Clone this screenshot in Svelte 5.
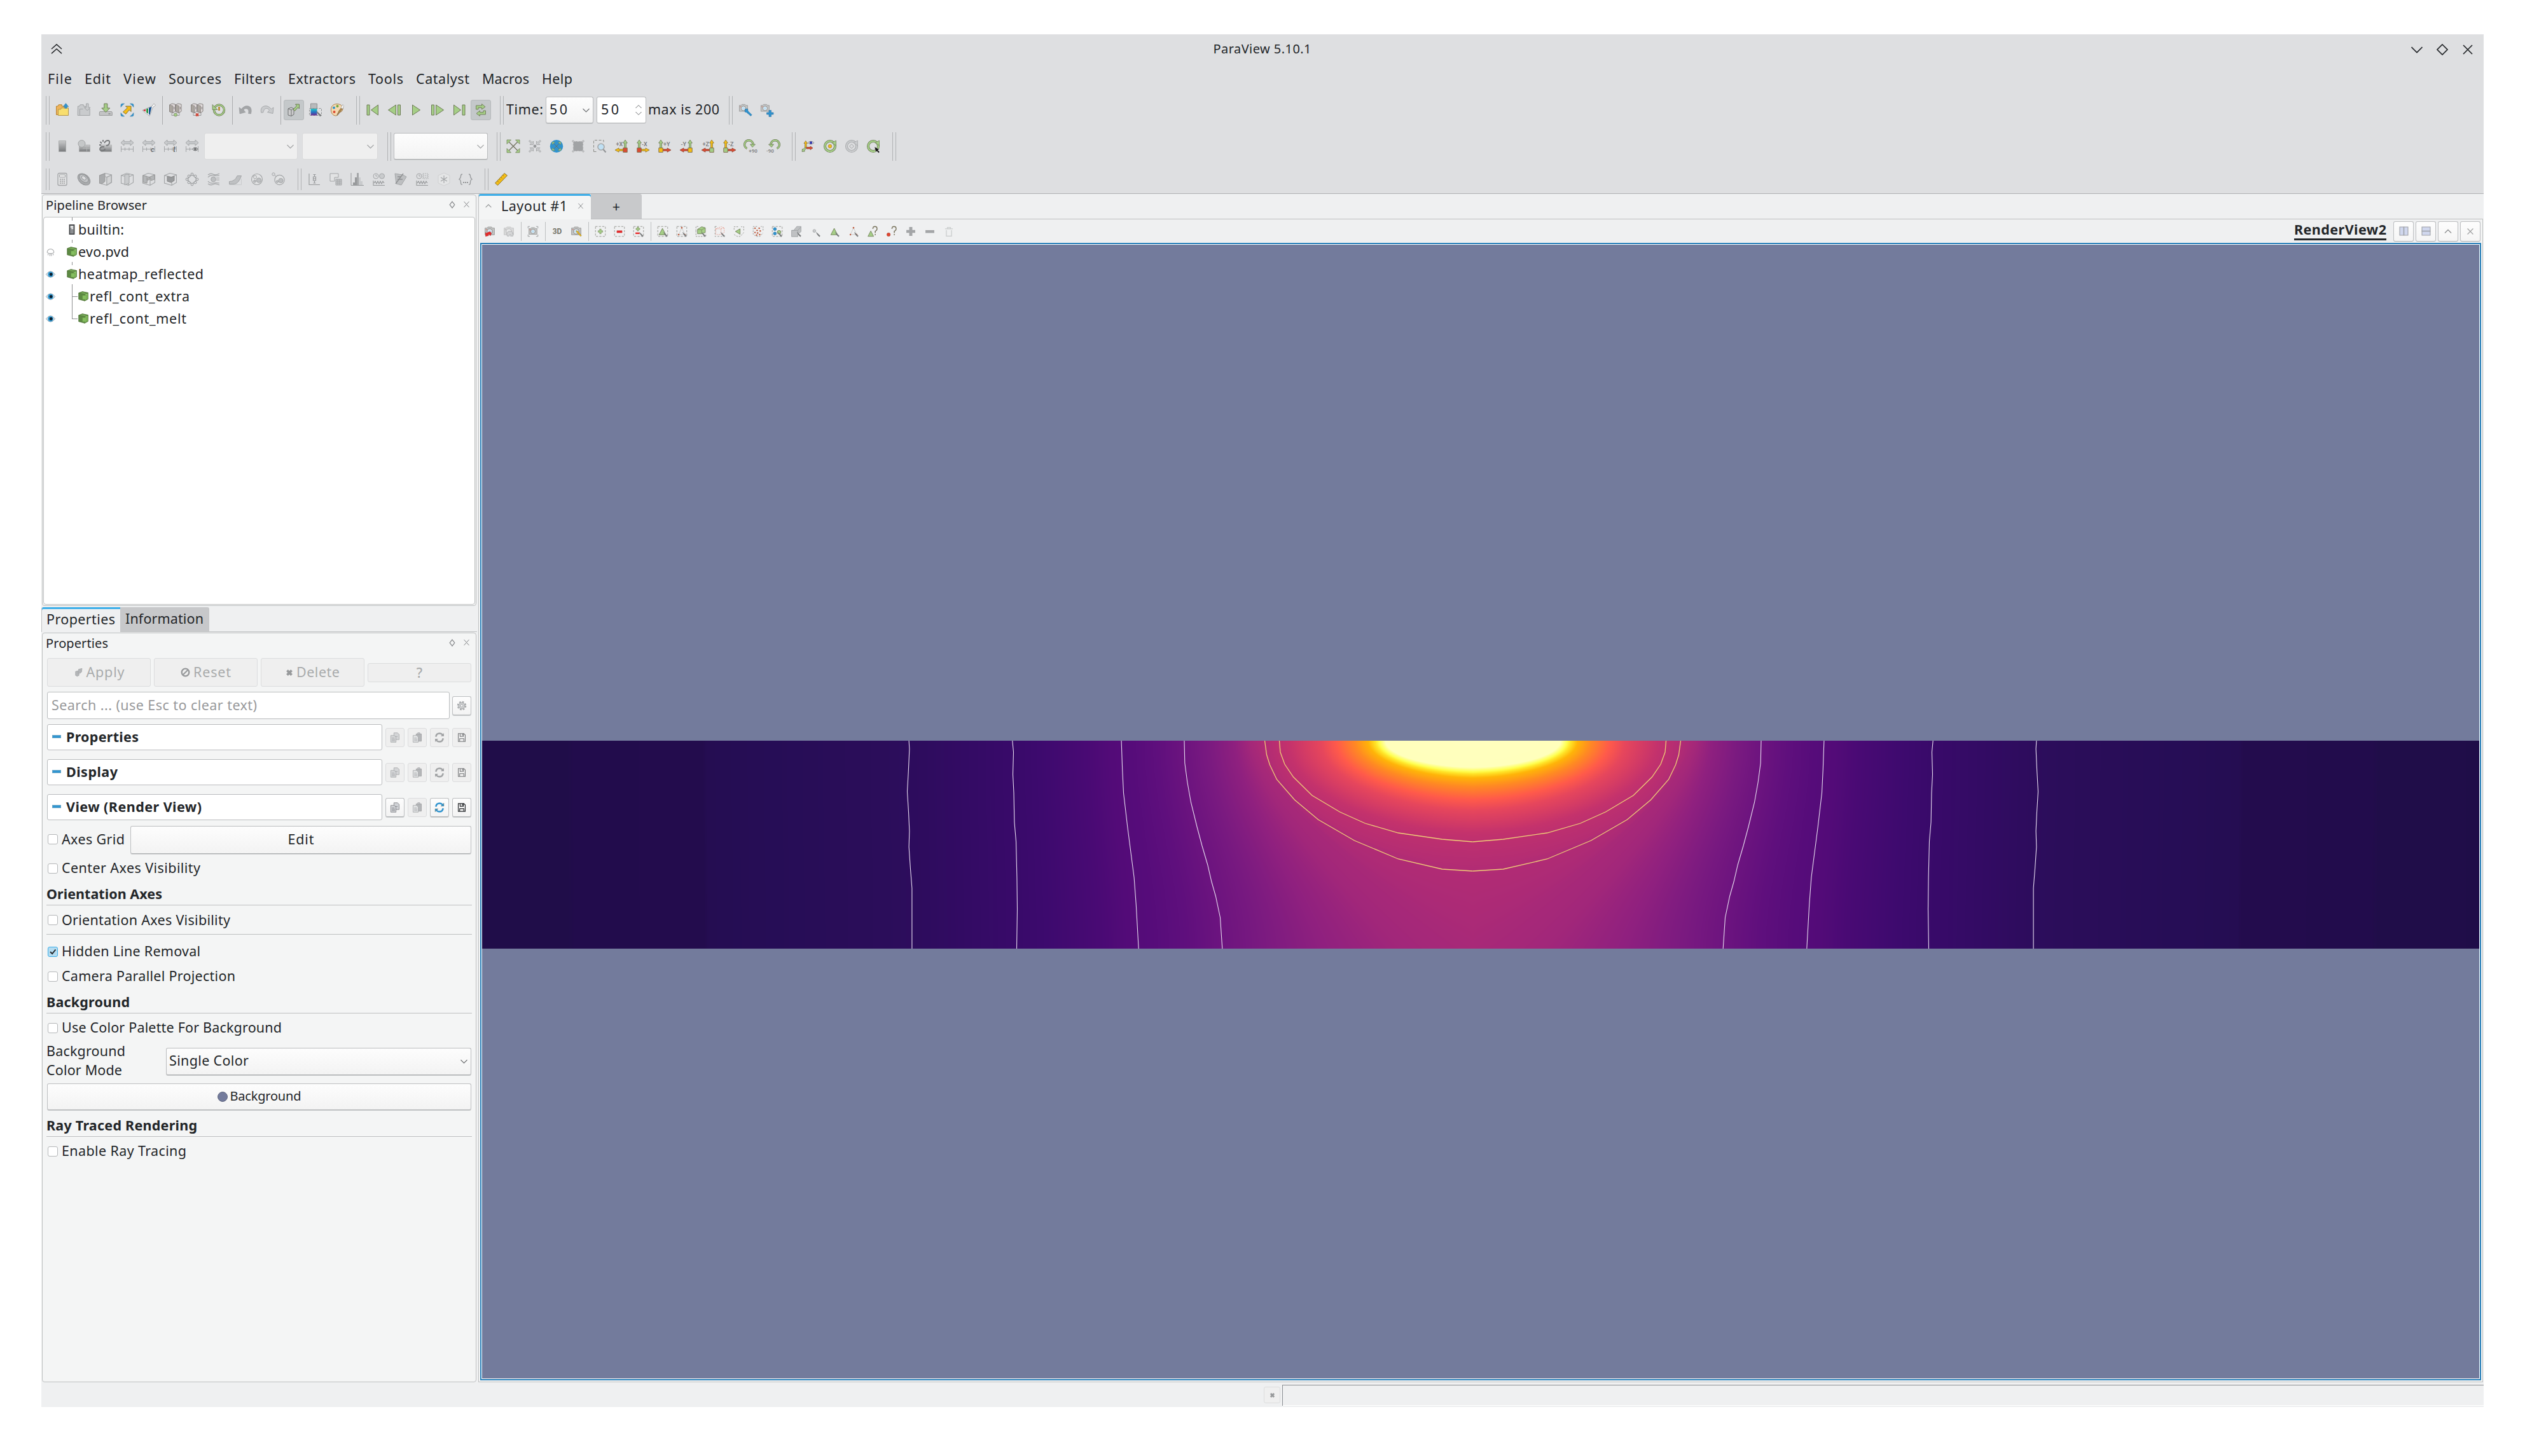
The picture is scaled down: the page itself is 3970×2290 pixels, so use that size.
<script>
  import { onMount } from 'svelte';

  // Spreads a label's letters so that it takes the given number of pixels.
  function fit(node, width) {
    const n = node.textContent.length;
    const natural = node.getBoundingClientRect().width;
    node.style.letterSpacing = `${(width + 2 - natural) / Math.max(1, n - 1)}px`;
    node.style.width = `${width + 2}px`;
  }

  const G = '#a5ce86';
  const GS = '#6c7a55';
  const Y = '#f5bd16';
  const YS = '#8a7430';
  const R = '#dc4a32';
  const B = '#2f93cf';
  const D = '#a3a5a7';
  const L = '#c9cbcd';

  const p = (d, fill = 'none', stroke = 'none', w = 1) =>
    `<path d="${d}" fill="${fill}" stroke="${stroke}" stroke-width="${w}"/>`;
  const c = (x, y, r, fill = 'none', stroke = 'none', w = 1) =>
    `<circle cx="${x}" cy="${y}" r="${r}" fill="${fill}" stroke="${stroke}" stroke-width="${w}"/>`;
  const t = (x, y, s, txt, fill = '#77797b', extra = '') =>
    `<text x="${x}" y="${y}" font-size="${s}" font-family="Roboto, sans-serif" fill="${fill}" ${extra}>${txt}</text>`;
  const dash = `<rect x="1.5" y="1.5" width="19" height="19" fill="none" stroke="#8b8b86" stroke-dasharray="4 2.5"/>`;
  const pick = p('M13 13l2 4 3.500 4 1.500-1.500-3.800-3.500z', '#77797a', '#77797a');

  const server = (x) =>
    p(`M${x} 3l4-2 5 1v11l-3.500 2.500-5.500-2z`, '#e2dcdc', '#85807e') +
    p(`M${x} 3l5.500 1.500v11l-5.500-2z`, '#aaa59e', '#85807e', 0.7) +
    p(`M${x + 7.3} 6v4`, 'none', '#6d6868', 0.8);
  const servers = server(1.5) + server(11) + p('M5 16v3.500h12V16', 'none', '#9a9a9a');

  const ruler = (mark) =>
    p('M1 5.500l5-4.500v2.800h10V1l5 4.500-5 4.500V7.200H6V10z', L, D) +
    p('M1.500 11v9M20.500 11v9M1.500 15.500h19M7.500 13v5M14 13v5', 'none', D) + mark;

  const cube = (inner) =>
    p('M1.500 5L10 1.500 20.500 4v12L13 20.500 1.500 17zM1.500 5L13 7.500 20.500 4M13 7.500v13', 'none', D, 1.1) + inner;

  const axis = (label, left, h, v, box) => {
    const x = left ? 17 : 5;
    const horiz = left ? 'M14 15.800H7v-2L1 17l6 3.200v-2h7z' : 'M8 15.800h7v-2l6 3.200-6 3.200v-2H8z';
    return (
      p(`M${x - 1.4} 13.500V6h-2L${x} 1l3.400 5h-2v7.500z`, v, v === G ? GS : YS, 0.8) +
      p(horiz, h, h === Y ? YS : '#8f4a38', 0.8) +
      p(`M${x - 3.2} 13.700h6.400v6.800h-6.400z`, box, '#7a6a48', 0.9) +
      t(left ? 2.5 : 9, 10.5, 9, label, '#77797b', 'font-weight="500"')
    );
  };

  const arrows4 = (col, out) => {
    const a = out ? 'M1 1h6.500L5.500 3 9 6.500 6.500 9 3 5.500 1 7.500z' : 'M8.500 8.500H3l2-2L1.500 3 3 1.500 6.500 5l2-2z';
    return [0, 90, 180, 270]
      .map((r) => `<g transform="rotate(${r} 11 11)">${p(a, col, col === G ? GS : '#98999a', 0.7)}</g>`)
      .join('');
  };
  // Slim arrows to the four corners.
  const reach = p('M4 4l14 14M18 4L4 18', 'none', '#6f705c', 1.3) +
    [0, 90, 180, 270].map((r) => `<g transform="rotate(${r} 11 11)">${p('M1 1h6.500L1 7.500z', G, GS, 0.7)}</g>`).join('');

  const camera = (lens = '#bfe0f4') =>
    p('M2 4.500h4l1.500-2h7l1.500 2h4v13H2z', '#c3c4c3', '#8f9090') + c(11, 11, 5, '#eee', '#808284', 1.2) + c(11, 11, 3.2, lens) + c(4.5, 7.5, 0.9, R);
  const smallCam = `<g transform="translate(0 .5) scale(.72)">${camera()}</g>`;
  const grey = (s) => `<g opacity=".5" style="filter:grayscale(1)">${s}</g>`;
  const tri = (x = 0, y = 0) => `<g transform="translate(${x} ${y})">${p('M10.500 5L17 17.500H4z', G, GS)}</g>`;
  const dots3 = p('M11 4L5 17h12z', 'none', '#c4c4c0') + c(11, 4, 1.5, '#bd5a3c') + c(5, 17, 1.5, '#bd5a3c') + c(17, 17, 1.5, '#bd5a3c');
  const scatter = [[5, 5], [13, 5], [9, 9], [15, 10], [5, 13], [10, 14], [8, 18], [14, 17]]
    .map(([x, y]) => c(x, y, 1.5, '#bd5a3c'))
    .join('');
  const copy = (f, s) =>
    p('M9 2h7l3 3v10H9z', f, s) + p('M3 7h7l3 3v10H3z', f, s) + p('M5 12h5M5 14.500h6M5 17h6M11 9h5', 'none', s);
  const turn = p('M4.500 14.500A6.700 6.700 0 1 1 14 8.500', 'none', GS, 3.4) + p('M4.500 14.500A6.700 6.700 0 1 1 14 8.500', 'none', G, 1.9) + p('M9.500 8h8L13 12.500z', G, GS, 0.8);
  const dashed = (d, pat = '3 2', col = '#8b8b86') => `<path d="${d}" fill="none" stroke="${col}" stroke-dasharray="${pat}"/>`;
  const ring = (col, edge) => c(11, 11, 8, 'none', edge, 4) + c(11, 11, 8, 'none', col, 2.4) + p('M14 5.500l6.500-3.500v8z', col, edge, 0.7);
  const ask = p('M11.500 6q0-4.500 4-4.500t4 4-3.500 5V14M16 16v2.200', 'none', '#77725a', 1.7);

  const icons = {
    open: p('M1.500 5h2.500l1.200-2.300h5V5h5v13.500h-13.700z', '#efb35a', '#b58434') + p('M4.500 10h4l1-2.200h11V19.500h-16z', '#f8de6e', '#b5964a') + p('M16.500.500l4.200 5.300h-2.500v2.500h-3.400V5.800h-2.500z', B, '#3a7ea5', 0.6),
    importState: p('M1.500 5h2.500l1.200-2.300h5V5h3v4h7v10.500h-19zM4.500 19V9.500h5', L, D) + p('M14.500 1h3.500v6h3l-4.700 5L11.500 7h3z', L, D),
    save: p('M2 13.500h18.500l.8 1.500v4.500h-20V15z', '#c3c4c5', '#9a9b9c') + p('M8.800 1h5v7h4l-6.500 6.500L4.800 8h4z', G, GS) + p('M15.500 17h3', 'none', '#666'),
    capture: p('M1 6.500V3.500Q1 1 3.500 1h3L3.500 3.500zM21 6.500V3.500Q21 1 18.500 1h-3l3 2.500zM1 15.500v3Q1 21 3.500 21h3l-3-2.500zM21 15.500v3Q21 21 18.500 21h-3l3-2.500z', B, '#3b7fa8', 0.6) + p('M17 5v8.500l-2.700-2.700-5.500 6.700-4.300-3.500 6.700-6.300L8.500 5z', Y, YS),
    catalyst: p('M1 11.500L16 5l3-4 2.500 2.500-4 3L12 20.500z', '#fff', '#888', 0.7) + p('M2 11.500l4-1.800v4z', '#c8262c') + p('M7 9.500l3-1.300v8.800l-3-2.300z', '#2f9448') + p('M11 7.700l4.700-2L12.300 19l-1.300-1.500z', '#17508f'),
    connect: servers + c(11, 18.500, 2.5, G, GS, 0.7),
    disconnect: servers + p('M9 16.500l4 4M13 16.500l-4 4', 'none', '#cf4536', 2.2),
    reload: c(11.500, 11, 8, 'none', GS, 3.400) + c(11.500, 11, 8, 'none', G, 1.900) + p('M1 2.500v8h8z', G, GS, 0.8) + p('M11.500 6v6', 'none', '#b78a2c', 2.6),
    undo: p('M1 7l3.500 2.500Q10 3 16 5t3.500 12l-4-.5Q17 10 13 9T8 11l3 3.500L2 17z', D, '#999b9d', 0.6),
    redo: p('M21 7l-3.500 2.500Q12 3 6 5T1.500 15l3.200 0Q6 9 9.500 8.500t5 3l-3 3 8.500 2z', L, D, 0.9),
    autoApply: p('M2 9l5-2 4 2v9l-4 2.500L2 19z', '#cccccd', '#6f7172') + p('M2 9l5 2v9.500M7 11l4-2', 'none', '#6f7172') + p('M19.500 2v7l-2-2-5 5.500-2.500-2.500 5.500-5.500-2-2.500z', G, GS),
    colorMap: `<defs><linearGradient id="cm" x1="0" y1="0" x2="0" y2="1"><stop offset="0" stop-color="#23c7c4"/><stop offset=".5" stop-color="#2474c4"/><stop offset="1" stop-color="#6a2a8e"/></linearGradient></defs>` + p('M3.500 1h10v8h-10z', '#b8babc', '#8d8f90') + dashed('M1.500 8.500h19v11h-19z', '3 2', '#8d8f90') + p('M3.500 9h10v10.500h-10z', 'url(#cm)') + pick,
    palette: p('M11 1.500C4 1.500 1 6 1.500 12s5 8.500 8.500 8c2-.5.5-3.500 2.500-4.500s7-1 7.500-6-4-8-9-8z', '#f4d9b0', '#a87e4a') + c(6, 7.5, 2, B) + c(11.5, 5, 2, '#6ea83e') + c(6.5, 14, 2, R) + p('M11.500 19.500l2-6.500L18 7l2 1.500-4.500 6z', '#b98a44', '#6a5a40', 0.7) + p('M17 7.500l3-5 1.500 2-2 5z', '#fff', '#888', 0.6),
    first: p('M2 3h4v16H2z', G, GS) + p('M19.500 3v16L8.500 11z', G, GS),
    prev: p('M16.500 3h4v16h-4z', G, GS) + p('M13.500 3v16L1.500 11z', G, GS),
    play: p('M5.500 3v16L17.500 11z', G, GS),
    next: p('M1.500 3h4v16h-4z', G, GS) + p('M8.500 3v16L20.500 11z', G, GS),
    last: p('M16 3h4v16h-4z', G, GS) + p('M2.500 3v16L13.500 11z', G, GS),
    loop: p('M3.500 10V4h9V1.500L18 6l-5.500 4V7.500H7V10z', G, GS, 0.9) + p('M18.500 12v6h-9v2.500L4 16.500 9.500 12v2.500H15V12z', G, GS, 0.9),
    camGear: smallCam + p('M10.500 9.500l4-.5.5 3.500 6 6-1.500 2-7-6-2.500-.5z', B, '#2b6f9d', 0.6),
    camPlus: smallCam + p('M14 11.500h3.500v3.500h3.500v3h-3.500v3.500H14V18h-3.500v-3H14z', B, '#2b6f9d', 0.6),
    bar: `<defs><linearGradient id="gb" x1="0" y1="0" x2="0" y2="1"><stop offset="0" stop-color="#c9cacb"/><stop offset="1" stop-color="#77797b"/></linearGradient></defs>` + p('M5.500 2.500h11v17h-11z', 'url(#gb)', '#a2a4a5', 0.8),
    edit: p('M3.500 9h17v10.500h-17z', 'url(#gb)', '#a2a4a5', 0.6) + c(7.5, 7, 5.5, '#c5c7c8', '#a2a4a5') + p('M9 14.500h11.500M15.500 9v10', 'none', '#b5b7b8', 0.8),
    sepMap: p('M3.500 9h17v10.500h-17z', 'url(#gb)', '#a2a4a5', 0.6) + p('M9 12q-5-1-6.500 2t2 4 6-3M9 6q2-4 5.500-4t2.500 4-5 4M2.500 4l2.500 2.500M7 1v3M1 9h3', 'none', '#77797b', 1.9),
    rescale: ruler(''),
    rescaleC: ruler(t(14, 20, 11, 'c', '#6d6f71', 'font-weight="700" font-style="italic"')),
    rescaleT: ruler(t(15, 20, 12, 't', '#6d6f71', 'font-weight="700" font-style="italic"')),
    rescaleV: ruler(p('M11.500 15.500q4.500-5 9 0-4.500 5-9 0z', '#d6d7d8', '#6d6f71') + c(16, 15.5, 2, '#6d6f71')),
    reset: reach,
    zoomData: arrows4(L, false) + c(11, 11, 3, '#97999b', '#dedfe1', 1.2),
    resetClosest: `<ellipse cx="11" cy="11" rx="10.300" ry="10" fill="${B}"/>` + `<g transform="translate(3.500 3.500) scale(.68)">` + reach + '</g>',
    zoomClosest: arrows4(L, false) + p('M5 3.500h12l1.500 2v11L17 18.500H5l-1.500-2v-11z', '#a1a3a5'),
    zoomBox: dashed('M1.500 19.500V1.500h15.500v4', '4 2.5') + dashed('M1.500 19.500h5', '4 2.5') + c(13, 12, 5, '#bfe0f4', '#a5a7a8', 1.6) + p('M16.500 16l4 4.500', 'none', '#929496', 2.2),
    px: axis('+X', true, Y, G, R),
    mx: axis('-X', false, Y, G, R),
    py: axis('+Y', false, R, G, Y),
    my: axis('-Y', true, R, G, Y),
    pz: axis('+Z', true, R, Y, G),
    mz: axis('-Z', false, R, Y, G),
    rotP: turn + t(7.2, 21, 8, '+90', '#77797b', 'font-weight="500"'),
    rotM: `<g transform="translate(22 0) scale(-1 1)">${turn}</g>` + t(1, 21, 8, '-90', '#77797b', 'font-weight="500"'),
    axes: p('M5.500 13V6.500H4L6.800 2.500 9.500 6.500H8V13z', Y, YS, 0.8) + p('M8 12.500h6v-1.500l4 2.800-4 2.700V15H8z', R, '#8f4a38', 0.8) + p('M5.500 13l2 1.500-3 3.500 1 1-4.500.5.5-4.500 1 1z', G, GS, 0.8) + p('M10 5.500q5-4.500 10 0-5 4.500-10 0z', '#eee', '#777', 0.8) + c(15, 5.500, 2.2, '#3a3fae'),
    center: ring(G, GS) + c(11, 11, 2.800, Y, YS, 0.6),
    centerOff: ring(L, D) + p('M11 7.500l3.500 3.500-3.500 3.500L7.500 11z', '#dcdddf', D),
    centerPick: ring(G, GS) + p('M13 12l2 8 1.500-1.500 3 3 1.500-1.500-3-3 2.500-1z', '#111', '#dedfe1', 0.4),
    calc: `<rect x="4" y="1.500" width="14" height="19" rx="2" fill="#e0e1e2" stroke="${D}" stroke-width="1.300"/>` + p('M6.500 4h9v3.500h-9z', '#eee', D) + p('M7 11h2M10 11h2M13 11h2M7 14h2M10 14h2M13 14h2M7 17h2M10 17h2M13 17h2', 'none', '#9a9c9e', 1.7),
    contour: `<g transform="rotate(40 11 11)"><ellipse cx="11" cy="11" rx="11" ry="7.500" fill="#a9abad" stroke="#939597"/><ellipse cx="10" cy="10" rx="8" ry="5" fill="#c4c6c8" stroke="#939597"/><ellipse cx="9.500" cy="9.500" rx="4" ry="2.500" fill="#dcdddf" stroke="#939597"/></g>`,
    clip: cube(p('M1.500 5L10 2v12.500L5 18l-3.500-1z', '#a9abad', '#999') + p('M13 8l7-3.500v11L13 20z', '#d3d4d5', D)),
    slice: cube(p('M7 4l7-1v14l-7 3z', L, D)),
    thresh: cube(p('M2 5l6 1.500v6l4-1V7.500L20 4v7l-6 2v-4l-5-1-1 9-6-1.500z', '#b4b6b8', '#999')),
    extract: cube(p('M6 6.500l6 1.500 5-2v7l-5 3-6-2z', '#999b9d', '#888')),
    glyph: c(11, 11, 6.5, 'none', D, 1.2) + p('M11 3L19 11l-8 8-8-8z', 'none', D, 1.2) + [[11, 3], [19, 11], [11, 19], [3, 11], [6, 6], [16, 6], [6, 16], [16, 16]].map(([x, y]) => c(x, y, 1.9, '#dedfe1', '#999b9d')).join(''),
    stream: c(10.500, 11, 3.8, '#bdbfc1', D) + p('M2 4q4-3 8-1t10-1M2 8q3-4 8-3t10 0M15 9h5M15 12h5M2 14q3 4 8 3t10 0M2 18q4 3 8 1t10 1', 'none', D, 1.2),
    warp: p('M1.500 18.500v-4q9 0 12.500-9l6.500 0Q16 18 9.500 18.500z', '#bfc1c3', D) + p('M1.500 19.500h19v-9', 'none', L),
    group: c(11, 11, 8.500, '#e2e3e4', D, 1.2) + c(8, 7.5, 2.5, 'none', D) + c(14, 12.500, 3.6, '#bdbfc1', D) + c(7.5, 14, 1.9, '#bdbfc1', D),
    level: c(12.500, 12, 7.6, '#e2e3e4', D, 1.2) + c(3, 3, 2.2, 'none', D) + p('M5 5l3 2', 'none', D) + c(14.500, 13, 3.500, '#bdbfc1', D) + c(9, 14.500, 1.7, '#bdbfc1', D),
    plotLine: p('M3 2v17.500h17M11.500 3v4M11.500 13v4M9.500 3.500h4M9.500 17h4M9.500 7h4v6h-4zM9.500 10h4', 'none', '#97999b', 1.1),
    plotSel: p('M2 2h13v6h-6v6H2z', '#e2e3e4', D) + p('M11 11h9v9h-9zM14 11v9M17 11v9M11 14h9M11 17h9', L, D, 1),
    histo: p('M1 1v19.500h20', 'none', '#97999b') + p('M4 20v-4h3v4z', '#97999b') + p('M7 20V8h3v12z', '#97999b') + p('M10 20V1h3v19z', '#a5a7a9') + p('M13 20V8h3v12z', L) + p('M16 20v-6h3v6z', L),
    plotTime: c(6, 6, 4, 'none', D) + p('M6 3.500V6h2', 'none', D) + c(15.500, 6, 4, L, D) + p('M2 13v7.500h18M3 17l2-3 2 4 2-4 2 4 2-4 2 4 2-4 2 3', 'none', '#97999b', 1.1),
    probe: p('M2 2l12 2 6 3-8 13-8-2z', '#bdbfc1', D) + p('M3 18L15 2M6 7h6M6 11h8', 'none', '#8d8f91', 1.3),
    plotSel2: c(6, 6, 4, 'none', D) + p('M6 3.500V6h2', 'none', D) + dashed('M12 2h8v8h-8zM12 5h8M12 8h8', '1.5 1.5', D) + p('M2 13v7.500h18M3 17l2-3 2 4 2-4 2 4 2-4 2 4 2-4 2 3', 'none', '#97999b', 1.1),
    prog: p('M11 1l9 4v12l-9 4-9-4V5z', '#e4e5e6', '#d0d1d2') + p('M11 5v12M6 8l10 6M16 8L6 14', 'none', '#a1a3a5', 1.1),
    braces: p('M6 3Q3.500 3 3.500 6t-2.500 5q2.500 1 2.500 5T6 19M16 3q2.500 0 2.500 3T21 11q-2.500 1-2.500 5T16 19', 'none', '#97999b', 1.3) + p('M7 16h2M10 16h2M13 16h2', 'none', '#97999b', 1.8),
    ruler: p('M1.500 17L16 1.500 20.500 5 5.500 20.500z', Y, YS) + p('M5 13.500l2 2M8 10.500l1.500 1.500M10.500 7.500l2 2M13.500 4.500L15 6', 'none', YS),
    camUndo: camera() + p('M3 20.500V13l2.200 1.500Q13 8.500 14 15l-2 4.500q-.5-4.500-4.500-2.500L9 19z', '#e8282a', '#b52320', 0.6),
    camRedo: grey(camera('#ddd')) + p('M8 20q-3-8 4-9t6 4l1-1v6h-5l1.500-2q-4-2-4 2z', '#d5d6d7', D, 0.8),
    shot: p('M1.500 5V1.500H5M17 1.500h3.500V5M1.500 17v3.500H5M17 20.500h3.500V17', 'none', '#8d8f91') + `<g transform="translate(1.500 1.500) scale(.86)">${camera()}</g>`,
    d3: t(2, 16, 15, '3D', '#75756a', 'font-weight="700" textLength="18" lengthAdjust="spacingAndGlyphs"'),
    camEdit: camera() + p('M11 9.500l2.500.5 7.500 9-1.500 1.500-8-8.500z', Y, YS, 0.7),
    selAdd: dash + p('M9.500 6.500h3v3h3v3h-3v3h-3v-3h-3v-3h3z', G, GS, 0.6),
    selSub: dash + p('M6 9.500h10v4H6z', '#e8282a', '#b9423c', 0.6),
    selTog: dash + p('M8.500 2.500h2.500v2.500h2.500v2.500h-2.500V10H8.500V7.500H6V5h2.500z', G, GS, 0.6) + p('M5 13h8v3H5z', '#e8282a') + pick,
    selCell: dash + tri(0, 0) + pick,
    selPt: dash + dots3 + pick,
    frCell: dashed('M1.500 10v10.500h19v-6M1.500 10V1.500h6') + p('M4.500 7l8-5 7 2v9l-7 2.500h-8z', G, GS) + p('M4.500 7l8 1 7-4M12.500 8v7', 'none', GS, 0.8) + pick,
    frPt: dashed('M3 6l10-4 6 2v9l-7 4H3zM3 6h10l6-2M13 6v11', '1.5 2', '#e0705c') + dashed('M1.500 1.500h6M1.500 1.500v19h19', '3 3') + pick,
    polyCell: dashed('M9 2L1.500 2v7M1.500 17l6 3.500h6l7-8M20 9V2h-5') + p('M4 11l9-5v10.500z', G, GS),
    polyPt: scatter + dashed('M9 1.500H1.500v15l6 4h7l6-7M20.500 9V1.500H16'),
    block: dash + c(6.500, 6.500, 3, B, '#2b6f9d', 0.6) + c(6.500, 15, 3, B, '#2b6f9d', 0.6) + c(14.500, 12.500, 3.500, G, GS) + pick,
    hoverBlk: p('M2 9h4l6-7.500h8v10l-6 4.500v5H2zM14 9l6-7M2 9h12v7', '#bfc1c3', '#9c9ea0') + pick,
    hover: c(9, 10, 2.800, L, D) + pick,
    interCell: tri(0, 0) + pick,
    interPt: dots3 + pick,
    hovCell: p('M7.500 10l5.500 10.500H2z', G, GS) + ask,
    hovPt: c(5, 17, 3.300, '#e2442e', '#a33a2a', 0.7) + ask,
    grow: p('M8 2.500h6v5.800h5.500v5.500H14v5.700H8v-5.700H2.500V8.300H8z', D),
    shrink: p('M2.500 8.500h17v5.500h-17z', D),
    trash: p('M3.500 6h15M8 5.500v-2h6v2M6 8.500v11.500h10V8.500', 'none', '#c9cbcc', 1.5),
    copy: copy('#d4d5d7', '#a6a8aa'),
    copyOn: copy('#d0d2d6', '#7f8184'),
    paste: p('M9 4h10v14H9z', '#b4b6b8', '#9fa1a3') + p('M12 2h4v3h-4z', '#c7c9cb', '#9fa1a3') + p('M3 7h7l3 3v10H3z', '#e2e3e4', '#a6a8aa') + p('M5 12h5M5 14.500h6M5 17h6', 'none', '#a6a8aa'),
    refresh: p('M4 9.500Q5 3 11 3q4 0 6 3M18 12.500Q17 19 11 19q-4 0-6-3', 'none', '#a1a3a5', 3) + p('M19.500 2.500v6h-6zM2.500 19.500v-6h6z', '#a1a3a5'),
    refreshOn: p('M4 9.500Q5 3 11 3q4 0 6 3M18 12.500Q17 19 11 19q-4 0-6-3', 'none', B, 3) + p('M19.500 2.500v6h-6zM2.500 19.500v-6h6z', B, '#8a8060', 0.5),
    disk: p('M3.500 2.500h12l3 3v14h-15zM7.500 2.500v6h7v-6M12.500 3v4M6.500 19.500v-6h9v6', 'none', '#77797b', 1.5),
    diskOn: p('M3.500 2.500h12l3 3v14h-15zM7.500 2.500v6h7v-6M12.500 3v4M6.500 19.500v-6h9v6', 'none', '#232629', 1.6),
    gear: c(11, 11, 6, '#cfd1d2', '#9c9ea0', 1.2) + c(11, 11, 7.6, 'none', '#a9abad', 2.6).replace('/>', ' stroke-dasharray="3.4 2.57"/>') + c(11, 11, 2.4, '#fff', '#9c9ea0'),
    apply: p('M4 9l5-1.500 3 1.500v9l-4 2-4-2z', '#b4b6b8', '#9fa1a3') + p('M11 4l8-2-1 8-3 3-5 0z', '#b4b6b8', '#9fa1a3'),
    no: c(11, 11, 8.500, 'none', '#97999b', 3.4) + p('M17 5L5 17', 'none', '#97999b', 3),
    del: p('M4.500 4.500l13 13M17.500 4.500l-13 13', 'none', '#97999b', 7),
    splitH: p('M1.500 1.500h19v19h-19z', '#d0d7ee', '#9da0a6', 1.6) + p('M11 1v20', 'none', '#9da0a6', 2.2),
    splitV: p('M1.500 1.500h19v19h-19z', '#d0d7ee', '#9da0a6', 1.6) + p('M1 11h20', 'none', '#9da0a6', 2.2),
    up: p('M3 15l8-8 8 8', 'none', '#8d8f90', 1.9),
    x: p('M4 4l14 14M18 4L4 18', 'none', '#a0a1a2', 1.9),
    chev: p('M1 6l10 10L21 6', 'none', '#6d6f71', 2.2),
    float: p('M11 2l7 9-7 9-7-9z', 'none', '#85878a', 2.2),
    close: p('M3 2l16 18M19 2L3 20', 'none', '#85878a', 2),
    eye: p('M.5 11Q11-3 21.500 11 11 25 .5 11z', '#dfe6ea', '#8c9aa5', 1.2) + c(11, 11, 6.3, '#2f9bd6') + c(12, 11, 3.5, '#0a1c2b'),
    eyeOff: p('M3 12Q4 4 11 4t8 8M3 12q8 5 16 0M6 14l-1 4M9.500 15v5M13 15v5M16.500 14l1 4', 'none', '#a5a7a9', 1.5),
    cubeG: p('M1 4L9 1l12 2.500V17L14 21 1 17.500z', '#5d8a43', '#47692f') + p('M14 6.500L21 3.500V17l-7 4z', '#8bc465', '#47692f', 0.8) + p('M1 4L9 1l12 2.500-7 3z', '#76a957', '#47692f', 0.8) + p('M9 9h9v9H9z', '#86bf60', '#5f8f44', 0.8),
    host: p('M6 1h10v20H6z', '#8b8d90', '#3c3e40', 2) + p('M8 3.500h6v3.500H8z', '#f5f5f5') + p('M10 9h4', 'none', '#fff', 2)
  };

  const menus = [['File', 36], ['Edit', 39], ['View', 49], ['Sources', 81], ['Filters', 63], ['Extractors', 104], ['Tools', 53], ['Catalyst', 82], ['Macros', 72], ['Help', 46]];
  const mainBar = ['open', 'importState', 'save', 'capture', 'catalyst', '|', 'connect', 'disconnect', 'reload', '|', 'undo', 'redo', '|', '*autoApply', 'colorMap', 'palette'];
  const vcr = ['first', 'prev', 'play', 'next', 'last', '*loop'];
  const colorBar = ['bar', 'edit', 'sepMap', 'rescale', 'rescaleC', 'rescaleT', 'rescaleV'];
  const cameraBar = ['reset', 'zoomData', 'resetClosest', 'zoomClosest', 'zoomBox', 'px', 'mx', 'py', 'my', 'pz', 'mz', 'rotP', 'rotM'];
  const centerBar = ['axes', 'center', 'centerOff', 'centerPick'];
  const filterBar = ['calc', 'contour', 'clip', 'slice', 'thresh', 'extract', 'glyph', 'stream', 'warp', 'group', 'level'];
  const dataBar = ['plotLine', 'plotSel', 'histo', 'plotTime', 'probe', 'plotSel2', 'prog', 'braces'];
  const viewBar = ['camUndo', 'camRedo', '|', 'shot', '|', 'd3', 'camEdit', '|', 'selAdd', 'selSub', 'selTog', '|', 'selCell', 'selPt', 'frCell', 'frPt', 'polyCell', 'polyPt', 'block', 'hoverBlk', 'hover', 'interCell', 'interPt', 'hovCell', 'hovPt', 'grow', 'shrink', 'trash'];
  const tree = [
    { name: 'builtin:', w: 70, icon: 'host', eye: '', link: 'root' },
    { name: 'evo.pvd', w: 78, icon: 'cubeG', eye: 'eyeOff', link: 'root' },
    { name: 'heatmap_reflected', w: 195, icon: 'cubeG', eye: 'eye', link: 'root' },
    { name: 'refl_cont_extra', w: 155, icon: 'cubeG', eye: 'eye', link: 'mid' },
    { name: 'refl_cont_melt', w: 150, icon: 'cubeG', eye: 'eye', link: 'end' }
  ];
  const groups = [['Properties', 112, false], ['Display', 79, false], ['View (Render View)', 211, true]];

  // Colour along the surface, by distance from the heat source.
  const ramp = [
    [0, 255, 255, 190], [138, 255, 255, 188], [148, 255, 255, 82], [154, 255, 228, 40], [165, 255, 180, 8], [185, 255, 138, 34], [215, 255, 90, 74],
    [240, 230, 70, 92], [290, 196, 50, 108], [325, 178, 44, 116], [350, 165, 40, 121], [375, 143, 32, 127], [417, 122, 26, 128],
    [453, 109, 20, 127], [497, 95, 15, 125], [537, 86, 12, 122], [569, 83, 11, 120], [609, 73, 10, 116], [681, 61, 10, 110],
    [720, 57, 10, 106], [800, 51, 11, 100], [864, 46, 12, 94], [928, 43, 13, 90], [1007, 41, 13, 88], [1103, 38, 13, 86],
    [1205, 37, 13, 82], [1212, 35, 12, 77], [1414, 34, 12, 76], [1425, 32, 13, 73], [1700, 31, 13, 72]
  ];
  const depth = [[0, 0], [139, 42], [148, 48], [165, 58], [215, 92], [290, 144], [304, 159], [327, 205], [345, 327]];
  const drift = [[345, 345], [355, 235], [375, 138], [417, 85], [453, 60], [552, 27], [723, 6], [886, 5], [1700, 0]];
  const lerp = (tab, s, k = 1) => {
    let i = 1;
    while (i < tab.length - 1 && tab[i][0] < s) i++;
    const [a, b] = [tab[i - 1], tab[i]];
    const f = Math.min(1, Math.max(0, (s - a[0]) / (b[0] - a[0])));
    return a[k] + (b[k] - a[k]) * f;
  };
  const W = 3140;
  const H = 327;
  const CX = 1557.5;
  let canvas;

  function isoline(s, y) {
    if (s <= 345) {
      const q = y / lerp(depth, s);
      const m = Math.min(1, Math.max(0, (s - 320) / 25));
      return q >= 1 ? 0 : s * Math.pow(1 - Math.pow(q, 2 - 0.6 * m), 0.56 + 0.44 * m);
    }
    const v = y / H;
    const soft = v * v * (3 - 2 * v);
    const round = Math.pow(v, 1.4);
    const m = Math.min(1, (s - 345) / 80);
    return s - lerp(drift, s) * (round + (soft - round) * m);
  }

  onMount(() => {
    const ctx = canvas.getContext('2d');
    const img = ctx.createImageData(W, H);
    const colors = [];
    for (let s = 0; s <= 1700; s++) colors.push([lerp(ramp, s, 1), lerp(ramp, s, 2), lerp(ramp, s, 3)]);
    for (let y = 0; y < H; y++) {
      const xs = [];
      for (let s = 0; s <= 1700; s++) xs.push(isoline(s, y));
      const row = [];
      let s = 0;
      for (let d = 0; d < 1600; d++) {
        while (s < 1699 && xs[s + 1] <= d) s++;
        const f = Math.min(1, Math.max(0, (d - xs[s]) / Math.max(0.01, xs[s + 1] - xs[s])));
        row.push(colors[s].map((v, k) => v + (colors[s + 1][k] - v) * f));
      }
      for (let x = 0; x < W; x++) {
        const px = row[Math.round(Math.abs(x - CX))];
        img.data.set([px[0], px[1], px[2], 255], (y * W + x) * 4);
      }
    }
    ctx.putImageData(img, 0, 0);
  });

  // Contours as [distance from the centre, depth] points, drawn on both sides.
  const melt = [
    [[304, 0], [302.5, 18], [295.6, 37], [282, 57], [252.6, 86], [209, 112], [169, 130], [117, 145], [48, 155], [0, 159]],
    [[327, 0], [324, 22], [319, 38], [308, 61], [280, 93], [243, 124], [186, 157], [117, 186], [48, 202], [0, 205]]
  ];
  const far = [
    [[453.5, 0], [452.7, 35], [448.7, 65], [443, 97], [433.6, 135], [425.6, 165], [416.8, 195], [410.5, 222], [404, 245], [397, 278], [393.7, 327]],
    [[552.4, 0], [550.8, 45], [549, 82], [542.8, 135], [538, 172], [532.4, 215], [529.2, 258], [525.3, 327]],
    [[723.7, 0], [722, 18], [723, 53], [721.5, 82], [720.6, 128], [718, 158], [716.6, 215], [716, 265], [717, 327]],
    [[886.4, 0], [885.6, 13], [887.2, 48], [889, 80], [887, 112], [885.6, 142], [886.4, 167], [884, 202], [881.6, 232], [881.6, 327]]
  ];
  const line = (pts, sign) => pts.map(([d, y]) => `${(CX + sign * d).toFixed(1)},${y}`).join(' ');
</script>

{#snippet icon(name, cls = '')}
  <svg class="ic {cls}" viewBox="0 0 22 22">{@html icons[name]}</svg>
{/snippet}

{#snippet bar(items)}
  {#each items as it}
    {#if it === '|'}
      <span class="sep"></span>
    {:else}
      <span class="tb" class:on={it[0] === '*'}>{@render icon(it.replace('*', ''))}</span>
    {/if}
  {/each}
{/snippet}

{#snippet check(label, w, checked = false)}
  <span class="cb" class:checked>
    {#if checked}<svg viewBox="0 0 16 16"><path d="M3.500 8l3.500 3.500L13 4" fill="none" stroke="#232629" stroke-width="2.200" /></svg>{/if}
  </span>
  <span class="t" use:fit={w}>{label}</span>
{/snippet}

{#snippet dockTitle(label, w)}
  <div class="dock-title">
    <span class="t small" use:fit={w}>{label}</span>
    <span class="dock-btns">{@render icon('float', 'i12')}{@render icon('close', 'i11')}</span>
  </div>
{/snippet}

<div class="window">
  <header>
    <div class="titlebar">
      <svg class="shade" viewBox="0 0 20 18"><path d="M1 9l9-8 9 8M1 17l9-8 9 8" /></svg>
      <span class="t title" use:fit={152}>ParaView 5.10.1</span>
      <span class="win-btns">
        <svg viewBox="0 0 18 18"><path d="M.5 5l8.500 8.500L17.500 5" /></svg>
        <svg viewBox="0 0 18 18"><path d="M9 1l8 8-8 8-8-8z" /></svg>
        <svg viewBox="0 0 18 18"><path d="M2 2l14 14M16 2L2 16" /></svg>
      </span>
    </div>
    <nav>
      {#each menus as [m, w]}<span class="t" use:fit={w}>{m}</span>{/each}
    </nav>
    <div class="tools r1">
      <span class="handle lead"></span>
      {@render bar(mainBar)}
      <span class="handle"></span>
      {@render bar(vcr)}
      <span class="handle"></span>
      <span class="time"><span class="t" use:fit={56}>Time:</span></span>
      <span class="combo w74"><span class="t" use:fit={26}>50</span>{@render icon('chev', 'i11')}</span>
      <span class="combo spin"><span class="t" use:fit={26}>50</span>
        <svg class="spinner" viewBox="0 0 12 18"><path d="M1.500 6L6 1.500 10.500 6M1.500 12L6 16.500 10.500 12" /></svg>
      </span>
      <span class="max"><span class="t" use:fit={110}>max is 200</span></span>
      <span class="handle"></span>
      {@render bar(['camGear', 'camPlus'])}
    </div>
    <div class="tools r2">
      <span class="handle lead"></span>
      {@render bar(colorBar)}
      <span class="combo off w146">{@render icon('chev', 'i11 pale')}</span>
      <span class="combo off w118">{@render icon('chev', 'i11 pale')}</span>
      <span class="handle"></span>
      <span class="combo w147">{@render icon('chev', 'i11 pale')}</span>
      <span class="handle"></span>
      {@render bar(cameraBar)}
      <span class="handle"></span>
      {@render bar(centerBar)}
      <span class="handle"></span>
    </div>
    <div class="tools r3">
      <span class="handle lead"></span>
      {@render bar(filterBar)}
      <span class="handle"></span>
      {@render bar(dataBar)}
      <span class="handle"></span>
      {@render bar(['ruler'])}
    </div>
  </header>

  <main>
    <aside>
      <section class="dock pipeline">
        {@render dockTitle('Pipeline Browser', 157)}
        <div class="tree">
          {#each tree as n}
            <div class="node">
              <span class="eye">{#if n.eye}{@render icon(n.eye, 'i15')}{/if}</span>
              <span class="link {n.link}"></span>
              {@render icon(n.icon, 'i16')}
              <span class="t" use:fit={n.w}>{n.name}</span>
            </div>
          {/each}
        </div>
      </section>
      <div class="tabs">
        <span class="tab active"><span class="t" use:fit={106}>Properties</span></span>
        <span class="tab"><span class="t" use:fit={121}>Information</span></span>
        <span class="rest"></span>
      </div>
      <section class="dock props">
        {@render dockTitle('Properties', 96)}
        <div class="panel">
          <div class="actions">
            <span class="btn off tall">{@render icon('apply', 'i15')}<span class="t" use:fit={58}>Apply</span></span>
            <span class="btn off tall">{@render icon('no', 'i15')}<span class="t" use:fit={57}>Reset</span></span>
            <span class="btn off tall">{@render icon('del', 'i12')}<span class="t" use:fit={66}>Delete</span></span>
            <span class="btn off"><b>?</b></span>
          </div>
          <div class="search">
            <span class="field"><span class="t" use:fit={321}>Search ... (use Esc to clear text)</span></span>
            <span class="sq live">{@render icon('gear', 'i18')}</span>
          </div>
          {#each groups as [name, w, live]}
            <div class="group">
              <span class="field"><i></i><span class="t bold" use:fit={w}>{name}</span></span>
              <span class="sq" class:live>{@render icon(live ? 'copyOn' : 'copy', 'i18')}</span>
              <span class="sq">{@render icon('paste', 'i18')}</span>
              <span class="sq" class:live>{@render icon(live ? 'refreshOn' : 'refresh', 'i18')}</span>
              <span class="sq" class:live>{@render icon(live ? 'diskOn' : 'disk', 'i16')}</span>
            </div>
          {/each}
          <div class="row grid-row">
            {@render check('Axes Grid', 97)}
            <span class="btn live edit"><span class="t" use:fit={39}>Edit</span></span>
          </div>
          <div class="row center-axes">{@render check('Center Axes Visibility', 216)}</div>
          <h3 class="first"><span class="t bold" use:fit={180}>Orientation Axes</span></h3>
          <div class="row orient">{@render check('Orientation Axes Visibility', 263)}</div>
          <hr />
          <div class="row hidden-line">{@render check('Hidden Line Removal', 216, true)}</div>
          <div class="row">{@render check('Camera Parallel Projection', 271)}</div>
          <h3><span class="t bold" use:fit={129}>Background</span></h3>
          <div class="row">{@render check('Use Color Palette For Background', 344)}</div>
          <div class="mode">
            <span class="mode-label"><span class="t" use:fit={122}>Background</span><span class="t" use:fit={117}>Color Mode</span></span>
            <span class="combo mode-combo"><span class="t" use:fit={123}>Single Color</span>{@render icon('chev', 'i11')}</span>
          </div>
          <span class="btn live swatch"><em></em><span class="t small" use:fit={110}>Background</span></span>
          <h3><span class="t bold" use:fit={235}>Ray Traced Rendering</span></h3>
          <div class="row">{@render check('Enable Ray Tracing', 194)}</div>
        </div>
      </section>
    </aside>

    <section class="layout">
      <div class="ltabs">
        <span class="ltab">{@render icon('up', 'i12')}<span class="t" use:fit={102}>Layout #1</span>{@render icon('close', 'i10')}</span>
        <span class="plus">+</span>
        <span class="rest"></span>
      </div>
      <div class="frame">
        <div class="view-tools">
          {#each viewBar as it}
            {#if it === '|'}<span class="vsep"></span>{:else}<span class="vb">{@render icon(it, 'i18')}</span>{/if}
          {/each}
          <span class="view-name"><span class="t bold" use:fit={143}>RenderView2</span></span>
          {#each [['splitH', 'i15'], ['splitV', 'i15'], ['up', 'i14'], ['x', 'i14']] as [n, s]}
            <span class="vbtn">{@render icon(n, s)}</span>
          {/each}
        </div>
        <div class="view">
          <div class="scene">
            <div class="strip">
              <canvas bind:this={canvas} width={W} height={H}></canvas>
              <svg class="contours" viewBox="0 0 3140 327">
                {#each melt as m}
                  <polyline class="melt" points={line(m, -1)} />
                  <polyline class="melt" points={line(m, 1)} />
                {/each}
                {#each far as m}
                  <polyline points={line(m, -1)} />
                  <polyline points={line(m, 1)} />
                {/each}
              </svg>
            </div>
          </div>
        </div>
      </div>
    </section>
  </main>

  <footer>
    <span class="abort">{@render icon('del', 'i9')}</span>
    <span class="progress"></span>
  </footer>
</div>

<style>
  :global(body) { margin: 0; background: #fff; }
  .window {
    box-sizing: border-box; width: 3840px; height: 2159px; margin: 54px 0 0 65px;
    display: flex; flex-direction: column; background: #eff0f1; color: #232629;
    font: 21.500px/28px 'Noto Sans', 'Open Sans', 'Liberation Sans', sans-serif;
  }
  .window :global(*) { box-sizing: border-box; }
  .t { display: inline-block; white-space: nowrap; flex: none; padding-bottom: 2px; }
  .bold { font-weight: 700; }
  .small { font-size: 20px; }
  .ic { width: 22px; height: 22px; flex: none; display: block; overflow: visible; }
  .i9 { width: 9px; height: 9px; }
  .i10 { width: 10px; height: 10px; }
  .i11 { width: 11px; height: 11px; }
  .i12 { width: 12px; height: 12px; }
  .i14 { width: 14px; height: 14px; }
  .i15 { width: 15px; height: 15px; }
  .i16 { width: 16px; height: 16px; }
  .i18 { width: 18px; height: 18px; }
  .pale { opacity: .6; }

  header { height: 251px; background: #dedfe1; border-bottom: 1px solid #afb1b3; flex: none; }
  .titlebar { height: 47px; display: grid; grid-template-columns: 1fr auto 1fr; align-items: center; padding: 0 16px 0 15px; }
  .titlebar svg { fill: none; stroke: #232629; stroke-width: 1.700; }
  .shade { width: 18px; height: 16px; margin-top: -2px; }
  .title { font-size: 20px; }
  .win-btns { display: flex; justify-content: flex-end; gap: 22px; }
  .win-btns svg { width: 18px; height: 18px; }
  nav { height: 47px; display: flex; align-items: center; gap: 20px; padding-left: 10px; }
  .tools { display: flex; align-items: center; gap: 2px; height: 50px; }
  .r2 { margin-top: 7px; }
  .r3 { margin-top: 5px; height: 44px; }
  .handle { width: 20px; height: 45px; flex: none; display: flex; justify-content: flex-end; }
  .handle::after { content: ''; width: 4px; margin-right: 2px; border: solid #b1b3b5; border-width: 0 1px; }
  .r3 .handle { height: 34px; }
  .handle.lead { width: 15px; }
  .sep { width: 6px; height: 45px; display: flex; justify-content: center; flex: none; }
  .sep::after { content: ''; width: 1px; background: #abadaf; }
  .tb { width: 32px; height: 32px; flex: none; display: grid; place-items: center; border-radius: 3px; }
  .on { background: #c4c8ca; border: 1px solid #b7babc; }
  .time { width: 60px; }
  .combo {
    height: 42px; flex: none; display: flex; align-items: center; justify-content: space-between; padding: 0 5px;
    border: 1px solid #babcbe; border-bottom-color: #a9abad; border-radius: 3px;
    background: linear-gradient(#fdfdfd, #f3f3f3); box-shadow: 0 1px 0 #cbcdce;
  }
  .combo > .ic:only-child { margin-left: auto; }
  .off { background: #efefef; border-color: #d9dadb; box-shadow: none; color: #a9abac; }
  .w74 { width: 75px; }
  .spin { width: 78px; margin-left: 3px; background: #fff; box-shadow: none; padding-left: 6px; }
  .spinner { width: 12px; height: 18px; fill: none; stroke: #6d6f71; }
  .max { margin-left: 1px; width: 113px; }
  .w146 { width: 147px; margin-left: 1px; }
  .w118 { width: 119px; margin: 0 1px 0 5px; }
  .w147 { width: 148px; }

  main { flex: 1; display: flex; min-height: 0; }
  aside { width: 685px; display: flex; flex-direction: column; flex: none; }
  .dock { margin-left: 1px; width: 683px; border: 1px solid #bec0c1; border-radius: 4px; background: #f4f5f5; }
  .pipeline { margin-top: 1px; height: 647px; padding: 0 1px 1px; display: flex; flex-direction: column; }
  .dock-title { height: 34px; display: flex; align-items: center; justify-content: space-between; padding: 0 8px 0 4px; }
  .props .dock-title { padding: 0 9px 0 5px; height: 33px; }
  .dock-btns { display: flex; gap: 11px; margin-top: -4px; }
  .tree { flex: 1; border: 1px solid #bec0c1; border-radius: 4px; background: #fff; padding-top: 2px; }
  .node { height: 35px; display: flex; align-items: center; }
  .node .ic { margin-top: -1px; }
  .node .t { margin-left: 2px; }
  .eye { width: 32px; padding-left: 3px; }
  .link { width: 4px; height: 35px; flex: none; position: relative; }
  .link::before { content: ''; position: absolute; background: #8e9092; left: 12px; width: 1px; top: -2px; height: 5px; }
  .mid, .end { width: 22px; }
  .mid::before, .end::before { height: 37px; }
  .end::before { height: 19px; }
  .mid::after, .end::after { content: ''; position: absolute; left: 12px; top: 17px; width: 9px; height: 1px; background: #8e9092; }
  .tabs { display: flex; height: 39px; margin-top: 2px; }
  .tab { height: 39px; display: flex; align-items: center; padding: 0 8px; background: #c7c8ca; border-bottom: 1px solid #bec0c1; border-radius: 0 3px 0 0; width: 140px; }
  .tab.active { width: 124px; background: #eff0f1; border: solid #bec0c1; border-width: 0 0 0 1px; box-shadow: inset 0 3px 0 #3daee9; padding-left: 7px; border-radius: 3px 0 0 0; }
  .rest { flex: 1; border-bottom: 1px solid #bec0c1; }
  .props { margin-top: 1px; flex: 1; }
  .panel { padding: 6px 7px 0; display: flex; flex-direction: column; }
  .actions { display: flex; gap: 5px; align-items: center; height: 45px; }
  .btn { flex: 1; height: 30px; display: flex; align-items: center; justify-content: center; gap: 5px; border: 1px solid #dcddde; border-radius: 3px; }
  .tall { height: 45px; }
  .btn b { font-weight: 500; font-size: 21px; }
  .live { background: linear-gradient(#fdfdfd, #f3f3f3); border: 1px solid #bdbfc1; border-bottom-color: #adafb1; box-shadow: 0 1px 0 #cfd1d2; }
  .search { display: flex; align-items: center; margin-top: 8px; height: 43px; gap: 4px; }
  .field { flex: 1; height: 100%; display: flex; align-items: center; background: #fff; border: 1px solid #babcbe; border-radius: 3px; padding-left: 6px; }
  .search .field { color: #98999b; }
  .sq { width: 30px; height: 30px; flex: none; display: grid; place-items: center; border-radius: 3px; }
  .sq:not(.live) { background: #efefef; border: 1px solid #dcddde; }
  .group { display: flex; align-items: center; height: 41px; margin-top: 8px; gap: 5px; }
  .group + .group { margin-top: 14px; }
  .group .field { flex: none; width: 527px; padding-left: 7px; }
  .group .field i { width: 14px; height: 5px; margin: -2px 8px 0 0; background: #3096d2; border: 1px solid #6ba6c6; }
  .row { display: flex; align-items: center; height: 32px; margin-top: 7px; }
  .row .t { margin-left: 6px; }
  .cb { width: 16px; height: 16px; margin: -1px 0 0 1px; background: #fff; border: 1px solid #b5b7b9; border-radius: 3px; flex: none; }
  .cb svg { display: block; width: 14px; height: 14px; }
  .checked { background: #b4dcf1; border-color: #3daee9; }
  .grid-row { height: 45px; margin-top: 8px; }
  .edit { height: 44px; margin-left: 9px; }
  .row .edit .t { margin: 0; }
  .center-axes { height: 36px; margin-top: 5px; }
  h3 { margin: 8px -1px 0; height: 34px; border-bottom: 1px solid #bec0c1; font: inherit; display: flex; align-items: center; }
  h3.first { margin-top: 7px; height: 33px; }
  .orient { height: 37px; margin-top: 5px; }
  hr { margin: 3px -1px 0; border: 0; height: 1px; background: #bec0c1; }
  .hidden-line { margin-top: 11px; }
  .mode { display: flex; align-items: center; height: 60px; margin-top: 6px; }
  .mode-label { width: 188px; margin-left: -1px; display: flex; flex-direction: column; align-items: flex-start; }
  .mode-combo { flex: 1; height: 43px; }
  .mode-combo .t { margin-left: -1px; }
  .swatch { flex: none; height: 42px; margin-top: 5px; gap: 4px; }
  .swatch em { width: 16px; height: 16px; border-radius: 50%; background: #737b9c; border: 1px solid #5f6680; }

  .layout { margin-left: 2px; width: 3152px; display: flex; flex-direction: column; }
  .ltabs { display: flex; height: 40px; flex: none; }
  .ltab { width: 177px; display: flex; align-items: center; padding-left: 9px; background: #f4f5f5; border-left: 1px solid #bec0c1; box-shadow: inset 0 3px 0 #3daee9; border-radius: 3px 3px 0 0; }
  .ltab .t { margin: 0 16px 0 14px; }
  .ltab .ic { margin-top: -3px; }
  .plus { width: 80px; background: #c8c9cb; border-bottom: 1px solid #bec0c1; text-align: center; line-height: 40px; border-radius: 0 3px 0 0; }
  .frame { flex: 1; border: solid #bec0c1; border-width: 0 1px 1px; padding: 0 2px 2px; background: #f4f5f5; display: flex; flex-direction: column; }
  .view-tools { height: 37px; display: flex; align-items: center; background: #eff0f1; flex: none; }
  .vb { width: 30px; flex: none; display: grid; place-items: center; }
  .vsep { width: 8px; height: 30px; flex: none; display: flex; justify-content: center; }
  .vsep::after { content: ''; width: 1px; background: #bec0c1; }
  .view-name { margin: 0 11px 0 auto; height: 29px; border-bottom: 3px solid #232629; line-height: 23px; }
  .vbtn { width: 32px; height: 32px; margin-right: 3px; display: grid; place-items: center; border: 1px solid #bdbfc1; border-bottom-color: #adafb1; border-radius: 3px; background: linear-gradient(#fdfdfd, #f5f5f5); }
  .vbtn:last-child { margin-right: 1px; }
  .view { flex: 1; border: 2px solid #2980b9; padding: 1px; background: #fff; }
  .scene { height: 100%; background: #737b9c; padding-top: 780px; }
  .strip { position: relative; height: 327px; overflow: hidden; }
  canvas { display: block; width: 3140px; height: 327px; }
  .contours { position: absolute; inset: 0; width: 3140px; height: 327px; fill: none; stroke: #e6dcef; stroke-width: 1.100; }
  .melt { stroke: #eecb77; stroke-width: 1.300; }

  footer { height: 39px; flex: none; display: flex; padding: 4px 0 2px 1922px; }
  .abort { width: 26px; height: 26px; margin: 3px 3px 0 0; display: grid; place-items: center; border: 1px solid #dcddde; border-radius: 3px; background: #efefef; }
  .progress { flex: 1; border: solid #8a8e92; border-width: 1px 0 0 1px; box-shadow: inset 0 -1px 0 #fff; }
</style>
